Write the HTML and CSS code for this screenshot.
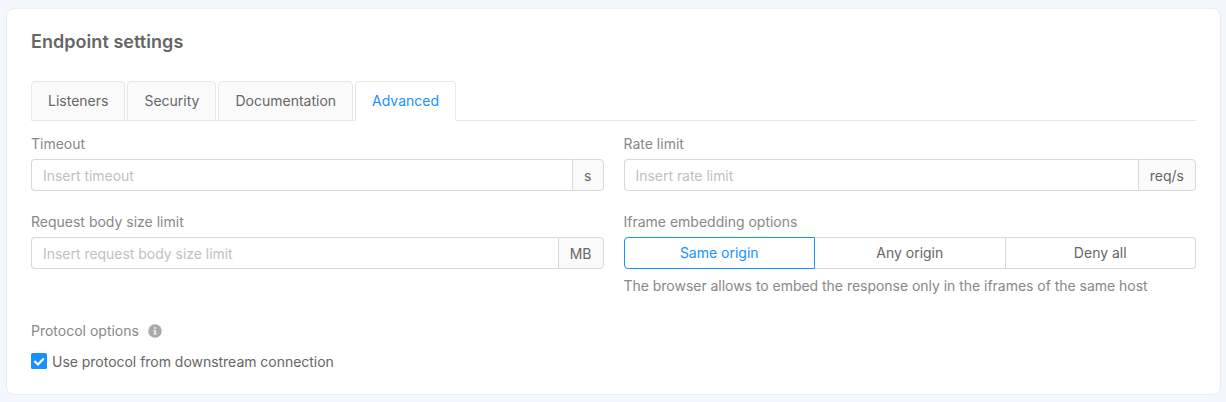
FILE: index.html
```html
<!DOCTYPE html>
<html lang="en">
<head>
<meta charset="utf-8">
<title>Endpoint settings</title>
<link rel="stylesheet" href="styles.css">
</head>
<body>
<main class="card">
  <h1 class="title">Endpoint settings</h1>
  <nav class="tabs">
    <a class="tab">Listeners</a>
    <a class="tab">Security</a>
    <a class="tab">Documentation</a>
    <a class="tab tab-active">Advanced</a>
  </nav>
  <form class="grid">
    <div class="field">
      <label class="label" for="timeout">Timeout</label>
      <div class="group"><input class="input" id="timeout" placeholder="Insert timeout"><span class="addon">s</span></div>
    </div>
    <div class="field">
      <label class="label" for="rate">Rate limit</label>
      <div class="group"><input class="input" id="rate" placeholder="Insert rate limit"><span class="addon">req/s</span></div>
    </div>
    <div class="field">
      <label class="label" for="body-size">Request body size limit</label>
      <div class="group"><input class="input" id="body-size" placeholder="Insert request body size limit"><span class="addon">MB</span></div>
    </div>
    <div class="field">
      <span class="label">Iframe embedding options</span>
      <div class="segments">
        <button type="button" class="segment segment-active">Same origin</button>
        <button type="button" class="segment">Any origin</button>
        <button type="button" class="segment">Deny all</button>
      </div>
      <p class="hint">The browser allows to embed the response only in the iframes of the same host</p>
    </div>
  </form>
  <section class="protocol">
    <div class="protocol-head">
      <span class="label">Protocol options</span>
      <svg class="info" viewBox="0 0 14 14"><circle cx="7" cy="7" r="6.8" fill="#aaa"/><path d="M6 3.3h2v1.5H6zM5.4 6H8v3.5h.8v1.1H5.4V9.5h.8V7.1h-.8z" fill="#eee"/></svg>
    </div>
    <div class="check">
      <svg class="box" viewBox="0 0 16 16"><rect width="16" height="16" rx="1.5" fill="#1890ff"/><path d="M3.4 8.1l3.6 3.4 5.8-5.9" fill="none" stroke="#fff" stroke-width="2.2"/></svg>
      <span>Use protocol from downstream connection</span>
    </div>
  </section>
</main>
</body>
</html>
```
FILE: styles.css
```css
* { box-sizing: border-box; }
body {
  margin: 0;
  padding: 8px 5px 7px 6px;
  background: #f3f8ff;
  color: #666;
  font: 14px/22px Inter, "Liberation Sans", sans-serif;
  font-optical-sizing: none;
}
.card {
  height: 387px;
  padding: 21px 24px;
  background: #fff;
  border: 1px solid #ececec;
  border-radius: 8px;
}
.title { margin: 0 0 28px; font-size: 18px; line-height: 23px; font-weight: 600; letter-spacing: 0.05px; }
.tabs { display: flex; gap: 2px; height: 40px; border-bottom: 1px solid #e8e8e8; }
.tab {
  height: 40px;
  padding: 0 16px;
  line-height: 38px;
  background: #fafafa;
  border: 1px solid #e8e8e8;
  border-radius: 4px 4px 0 0;
}
.tab-active { color: #1890ff; background: #fff; border-bottom-color: #fff; }
.grid { display: grid; grid-template-columns: 1fr 1fr; column-gap: 20px; padding-top: 12px; }
.field { height: 78px; }
.label { display: block; color: #888; line-height: 22px; margin-bottom: 4px; }
.group { display: flex; height: 32px; }
.input {
  flex: 1;
  min-width: 0;
  padding: 2px 11px 0;
  font: inherit;
  letter-spacing: -0.03px;
  color: #666;
  background: #fff;
  border: 1px solid #d9d9d9;
  border-right: 0;
  border-radius: 4px 0 0 4px;
}
.input::placeholder { color: #bfbfbf; opacity: 1; }
.addon {
  padding: 1px 11px 0;
  line-height: 30px;
  background: #fafafa;
  border: 1px solid #d9d9d9;
  border-radius: 0 4px 4px 0;
}
.segments { display: flex; height: 32px; }
.segment {
  flex: 1;
  padding: 0;
  font: inherit;
  line-height: 30px;
  color: #666;
  background: #fff;
  border: 1px solid #d9d9d9;
  border-left-width: 0;
}
.segment:last-child { border-radius: 0 4px 4px 0; }
.segment-active { color: #1890ff; border: 1px solid #1890ff; border-radius: 4px 0 0 4px; }
.hint { margin: 6px 0 0; color: #888; letter-spacing: -0.03px; }
.protocol { padding-top: 31px; }
.protocol-head { display: flex; align-items: center; gap: 9px; height: 22px; }
.protocol-head .label { margin: 0; }
.info { width: 14px; height: 14px; }
.check { display: flex; align-items: center; gap: 5px; margin-top: 9px; height: 22px; letter-spacing: -0.025px; }
.box { width: 16px; height: 16px; position: relative; top: -1px; }
```
